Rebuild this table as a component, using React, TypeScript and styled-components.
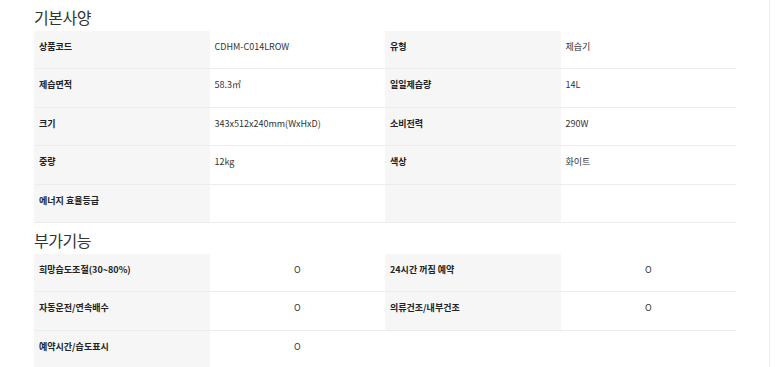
import React from 'react'
import styled, { createGlobalStyle } from 'styled-components'

const GlobalStyle = createGlobalStyle`
  body {
    margin: 0;
    background: #fff;
    font-family: "Noto Sans CJK KR", "Noto Sans", sans-serif;
    color: #333;
  }
`

const Page = styled.div`
  width: 770px;
  min-height: 367px;
  border-right: 1px solid #ededed;
  padding-left: 34px;
  box-sizing: border-box;
`

const Title = styled.h3`
  margin: 0;
  height: 31px;
  padding-top: 7px;
  box-sizing: border-box;
  font-size: 16px;
  line-height: 20px;
  font-weight: 400;
  color: #333;
  letter-spacing: -0.5px;
`

const SpecTable = styled.div`
  width: 702px;
  display: grid;
  grid-template-columns: repeat(4, 1fr);
  grid-auto-rows: 38.4px;
`

const Cell = styled.div`
  box-sizing: border-box;
  padding: 10px 5px 0;
  font-size: 9px;
  line-height: 12px;
  border-bottom: 1px solid #ececec;
`

const Label = styled(Cell)`
  background: #f6f6f6;
  font-weight: 700;
  color: #222;
`

const Value = styled(Cell)<{ $center?: boolean }>`
  background: #fff;
  color: #333;
  text-align: ${p => (p.$center ? 'center' : 'left')};
`

const Blank = styled.div`
  grid-column: span 2;
`

type Pair = [string, string]

const basic: Pair[][] = [
  [['상품코드', 'CDHM-C014LROW'], ['유형', '제습기']],
  [['제습면적', '58.3㎡'], ['일일제습량', '14L']],
  [['크기', '343x512x240mm(WxHxD)'], ['소비전력', '290W']],
  [['중량', '12kg'], ['색상', '화이트']],
  [['에너지 효율등급', ''], ['', '']],
]

const extra: Pair[][] = [
  [['희망습도조절(30~80%)', 'O'], ['24시간 꺼짐 예약', 'O']],
  [['자동운전/연속배수', 'O'], ['의류건조/내부건조', 'O']],
  [['예약시간/습도표시', 'O']],
]

const Rows = ({ rows, center }: { rows: Pair[][]; center?: boolean }) => (
  <SpecTable>
    {rows.map((row, i) => (
      <React.Fragment key={i}>
        {row.map(([k, v], j) => (
          <React.Fragment key={j}>
            <Label>{k}</Label>
            <Value $center={center}>{v}</Value>
          </React.Fragment>
        ))}
        {row.length === 1 && <Blank />}
      </React.Fragment>
    ))}
  </SpecTable>
)

export default function App() {
  return (
    <>
      <GlobalStyle />
      <Page>
        <Title>기본사양</Title>
        <Rows rows={basic} />
        <Title>부가기능</Title>
        <Rows rows={extra} center />
      </Page>
    </>
  )
}
